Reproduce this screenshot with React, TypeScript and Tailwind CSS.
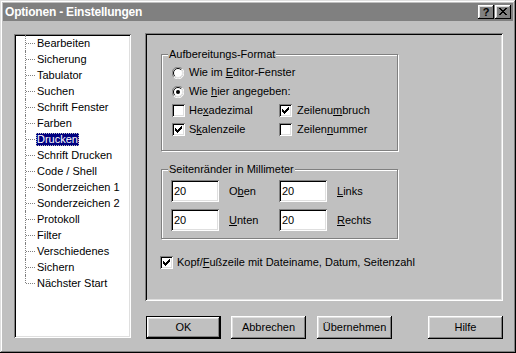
const raised =
  'shadow-[inset_-1px_-1px_0_#000,inset_1px_1px_0_#fff,inset_-2px_-2px_0_#808080,inset_2px_2px_0_#dfdfdf]'

const treeItems = [
  'Bearbeiten',
  'Sicherung',
  'Tabulator',
  'Suchen',
  'Schrift Fenster',
  'Farben',
  'Drucken',
  'Schrift Drucken',
  'Code / Shell',
  'Sonderzeichen 1',
  'Sonderzeichen 2',
  'Protokoll',
  'Filter',
  'Verschiedenes',
  'Sichern',
  'Nächster Start',
]

function Radio({ checked = false }: { checked?: boolean }) {
  return (
    <svg width="12" height="12" viewBox="0 0 12 12" className="shrink-0">
      <circle cx="6" cy="6" r="5" fill="#fff" />
      <path d="M10.2 1.8 A5.5 5.5 0 0 0 1.8 10.2" stroke="#808080" fill="none" />
      <path d="M1.8 10.2 A5.5 5.5 0 0 0 10.2 1.8" stroke="#fff" fill="none" />
      <path d="M9.2 2.8 A4.5 4.5 0 0 0 2.8 9.2" stroke="#000" fill="none" />
      <path d="M2.8 9.2 A4.5 4.5 0 0 0 9.2 2.8" stroke="#dfdfdf" fill="none" />
      {checked && <circle cx="6" cy="6" r="2" fill="#000" />}
    </svg>
  )
}

function Check({ checked = false }: { checked?: boolean }) {
  return (
    <div className="w-[13px] h-[13px] shrink-0 bg-white shadow-[inset_1px_1px_0_#808080,inset_-1px_-1px_0_#fff,inset_2px_2px_0_#000,inset_-2px_-2px_0_#dfdfdf]">
      {checked && (
        <svg width="13" height="13" viewBox="0 0 13 13" shapeRendering="crispEdges">
          <path
            fill="#000"
            d="M9 3h1v1h-1z M8 4h2v1h-2z M3 5h1v1h-1z M7 5h3v1h-3z M3 6h2v1h-2z M6 6h3v1h-3z M3 7h5v1h-5z M4 8h3v1h-3z M5 9h1v1h-1z"
          />
        </svg>
      )}
    </div>
  )
}

function GroupBox({
  label,
  className,
  children,
}: {
  label: string
  className: string
  children: React.ReactNode
}) {
  return (
    <div
      className={`relative border border-[#808080] shadow-[inset_1px_1px_0_#fff,1px_1px_0_#fff] ${className}`}
    >
      <span className="absolute -top-[8px] left-[6px] bg-[#c0c0c0] px-[1px] leading-[14px]">
        {label}
      </span>
      {children}
    </div>
  )
}

function Field({ value }: { value: string }) {
  return (
    <div className="w-[48px] h-[22px] bg-white pl-[3px] flex items-center shrink-0 shadow-[inset_1px_1px_0_#808080,inset_-1px_-1px_0_#fff,inset_2px_2px_0_#000,inset_-2px_-2px_0_#dfdfdf]">
      {value}
    </div>
  )
}

function Button({ label, isDefault = false, className = '' }: { label: string; isDefault?: boolean; className?: string }) {
  if (isDefault) {
    return (
      <div className={`w-[75px] h-[23px] border border-black ${className}`}>
        <div className={`w-full h-full flex items-center justify-center ${raised}`}>{label}</div>
      </div>
    )
  }
  return (
    <div className={`w-[75px] h-[23px] flex items-center justify-center ${raised} ${className}`}>
      {label}
    </div>
  )
}

export default function App() {
  return (
    <div className="w-[516px] h-[353px] bg-[#c0c0c0] p-[3px] flex flex-col text-[11px] text-black font-['Liberation_Sans',Arial,sans-serif] shadow-[inset_-1px_-1px_0_#000,inset_1px_1px_0_#dfdfdf,inset_-2px_-2px_0_#808080,inset_2px_2px_0_#fff]">
      {/* Titelleiste */}
      <div className="h-[18px] bg-[#808080] flex items-center justify-between pl-[2px] pr-[2px]">
        <span className="text-white font-bold text-[12px] tracking-[-0.2px]">Optionen - Einstellungen</span>
        <div className="flex items-center">
          <div className={`w-[16px] h-[14px] flex items-center justify-center font-bold text-[11px] leading-none ${raised}`}>
            ?
          </div>
          <div className={`w-[16px] h-[14px] ml-[1px] ${raised}`}>
            <svg width="16" height="14" viewBox="0 0 16 14" shapeRendering="crispEdges">
              <path
                fill="#000"
                d="M4 3h2v1h-2z M10 3h2v1h-2z M5 4h2v1h-2z M9 4h2v1h-2z M6 5h4v1h-4z M7 6h2v1h-2z M6 7h4v1h-4z M5 8h2v1h-2z M9 8h2v1h-2z M4 9h2v1h-2z M10 9h2v1h-2z"
              />
            </svg>
          </div>
        </div>
      </div>

      <div className="flex pl-[11px] pt-[12px]">
        {/* Baum */}
        <div className="mt-[1px] w-[117px] h-[304px] bg-white pl-[11px] pt-[1px] shadow-[inset_1px_1px_0_#808080,inset_-1px_-1px_0_#fff,inset_2px_2px_0_#000,inset_-2px_-2px_0_#dfdfdf]">
          {treeItems.map((item, i) => {
            const last = i === treeItems.length - 1
            const selected = item === 'Drucken'
            return (
              <div key={item} className="flex h-[16px] items-center">
                <div className="relative h-full w-[11px] shrink-0">
                  <div
                    className={`absolute left-0 top-0 border-l border-dotted border-[#808080] ${last ? 'h-1/2' : 'h-full'}`}
                  />
                  <div className="absolute left-[1px] top-1/2 w-[9px] border-t border-dotted border-[#808080]" />
                </div>
                <span
                  className={
                    selected
                      ? 'h-[13px] px-[1px] flex items-center bg-[#000080] text-white outline-1 outline-dotted outline-[#c0c0c0] -outline-offset-1'
                      : 'h-[13px] px-[1px] flex items-center'
                  }
                >
                  {item}
                </span>
              </div>
            )
          })}
        </div>

        <div className="ml-[14px] flex flex-col">
          {/* Seite */}
          <div className="w-[358px] h-[268px] pl-[16px] pt-[21px] shadow-[inset_1px_1px_0_#808080,inset_-1px_-1px_0_#fff,inset_2px_2px_0_#000,inset_-2px_-2px_0_#dfdfdf]">
            <GroupBox label="Aufbereitungs-Format" className="w-[237px] h-[97px] pt-[8px] pl-[10px]">
              <div className="flex h-[19px] items-center">
                <Radio />
                <span className="ml-[5px]">
                  Wie im <span className="underline">E</span>ditor-Fenster
                </span>
              </div>
              <div className="flex h-[19px] items-center">
                <Radio checked />
                <span className="ml-[5px]">
                  Wie <span className="underline">h</span>ier angegeben:
                </span>
              </div>
              <div className="flex h-[19px] items-center">
                <div className="flex w-[107px] items-center">
                  <Check />
                  <span className="ml-[4px]">
                    He<span className="underline">x</span>adezimal
                  </span>
                </div>
                <Check checked />
                <span className="ml-[5px]">
                  Zeilenu<span className="underline">m</span>bruch
                </span>
              </div>
              <div className="flex h-[19px] items-center">
                <div className="flex w-[107px] items-center">
                  <Check checked />
                  <span className="ml-[4px]">
                    S<span className="underline">k</span>alenzeile
                  </span>
                </div>
                <Check />
                <span className="ml-[5px]">
                  Zeilen<span className="underline">n</span>ummer
                </span>
              </div>
            </GroupBox>

            <GroupBox label="Seitenränder in Millimeter" className="mt-[18px] w-[237px] h-[70px] pt-[10px] pl-[9px]">
              <div className="flex items-center">
                <div className="flex w-[108px] items-center">
                  <Field value="20" />
                  <span className="ml-[10px]">
                    O<span className="underline">b</span>en
                  </span>
                </div>
                <Field value="20" />
                <span className="ml-[10px]">
                  <span className="underline">L</span>inks
                </span>
              </div>
              <div className="mt-[7px] flex items-center">
                <div className="flex w-[108px] items-center">
                  <Field value="20" />
                  <span className="ml-[10px]">
                    <span className="underline">U</span>nten
                  </span>
                </div>
                <Field value="20" />
                <span className="ml-[10px]">
                  <span className="underline">R</span>echts
                </span>
              </div>
            </GroupBox>

            <div className="mt-[15px] -ml-[1px] flex items-center">
              <Check checked />
              <span className="ml-[4px]">
                Kopf/<span className="underline">F</span>ußzeile mit Dateiname, Datum, Seitenzahl
              </span>
            </div>
          </div>

          {/* Schaltflächen */}
          <div className="mt-[15px] flex">
            <Button label="OK" isDefault className="ml-[1px]" />
            <Button label="Abbrechen" className="ml-[10px]" />
            <Button label="Übernehmen" className="ml-[11px]" />
            <Button label="Hilfe" className="ml-[36px]" />
          </div>
        </div>
      </div>
    </div>
  )
}
